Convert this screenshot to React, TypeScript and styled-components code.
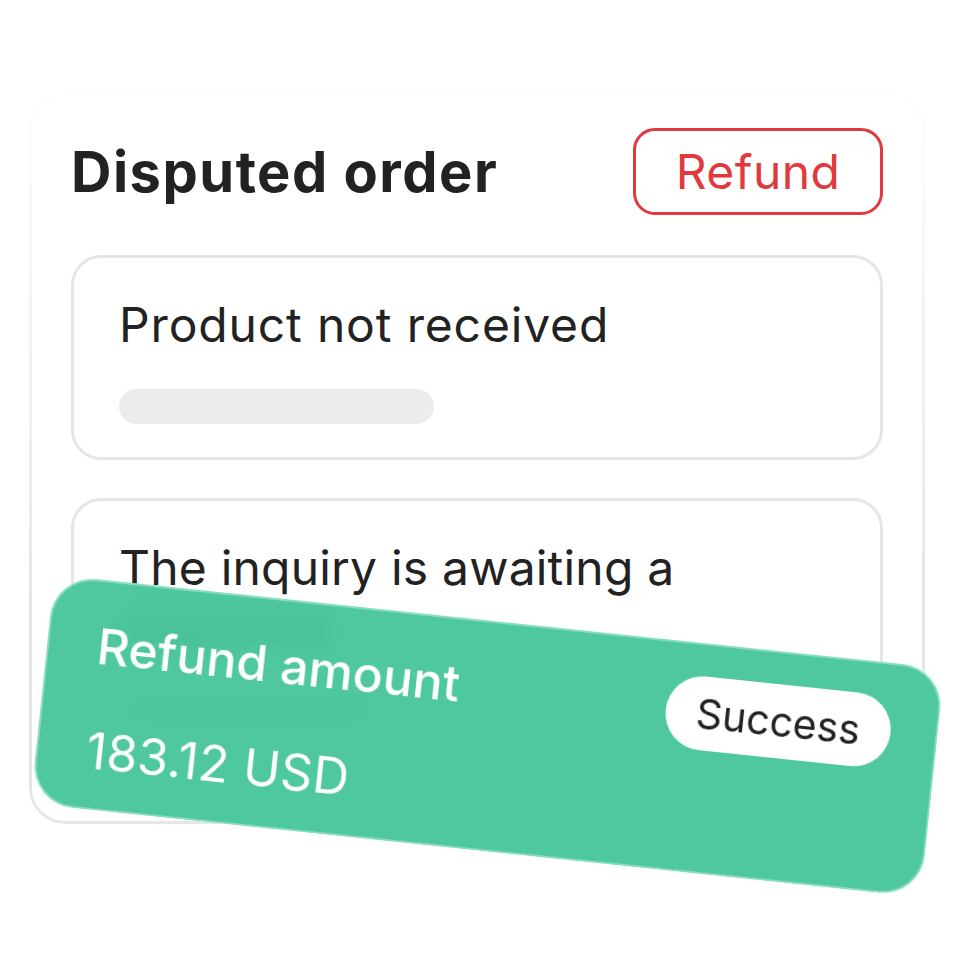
import React from 'react';
import styled, { createGlobalStyle } from 'styled-components';

const GlobalStyle = createGlobalStyle`
	html, body {
		margin: 0;
		padding: 0;
		background: #ffffff;
	}
	body {
		font-family: Inter, 'Noto Sans', sans-serif;
		color: #222222;
	}
`;

const Page = styled.div`
	position: relative;
	width: 960px;
	height: 960px;
	padding: 93px 0 0 29px;
	box-sizing: border-box;
	overflow: hidden;
`;

const OuterCard = styled.section`
	position: relative;
	width: 896px;
	box-sizing: border-box;
	padding: 35px 42px 61px 42px;
	display: flex;
	flex-direction: column;
	gap: 40px;
	border-radius: 36px;
	background: #ffffff;

	&::before {
		content: '';
		position: absolute;
		inset: 0;
		border: 3px solid #e6e6e6;
		border-radius: 36px;
		pointer-events: none;
		-webkit-mask-image: linear-gradient(to bottom, rgba(0, 0, 0, 0.05) 0%, #000 70%);
		mask-image: linear-gradient(to bottom, rgba(0, 0, 0, 0.05) 0%, #000 70%);
	}
`;

const Header = styled.header`
	display: flex;
	align-items: center;
	justify-content: space-between;
`;

const Title = styled.h1`
	margin: 0;
	font-size: 56px;
	font-weight: 700;
	letter-spacing: 1.5px;
	color: #222222;
`;

const OutlineButton = styled.button`
	width: 250px;
	height: 87px;
	box-sizing: border-box;
	border: 3px solid #e03a3e;
	border-radius: 22px;
	background: #ffffff;
	color: #e03a3e;
	font-family: Inter, sans-serif;
	font-size: 48px;
	font-weight: 400;
	letter-spacing: 0.4px;
	padding: 0;
`;

const Stack = styled.div`
	display: flex;
	flex-direction: column;
	gap: 38px;
`;

const InfoCard = styled.div`
	box-sizing: border-box;
	border: 3px solid #e6e6e6;
	border-radius: 30px;
	padding: 37px 45px 33px 45px;
	display: flex;
	flex-direction: column;
	gap: 34px;
`;

const InfoText = styled.p<{ $tracking?: number }>`
	margin: 0;
	font-size: 48px;
	line-height: 60px;
	font-weight: 400;
	letter-spacing: ${({ $tracking = 0.85 }) => $tracking}px;
	color: #222222;
	max-width: 620px;
`;

const Placeholder = styled.div<{ $width: number }>`
	width: ${({ $width }) => $width}px;
	height: 35px;
	border-radius: 18px;
	background: #ececec;
`;

const GlassCard = styled.div`
	position: absolute;
	left: 40px;
	top: 621px;
	width: 895px;
	height: 230px;
	box-sizing: border-box;
	padding: 31px 45px 0 48px;
	border-radius: 42px;
	background: rgba(60, 194, 149, 0.9);
	border: 2px solid rgba(140, 225, 196, 0.9);
	backdrop-filter: blur(14px);
	-webkit-backdrop-filter: blur(14px);
	transform: rotate(6deg);
	color: #ffffff;
	display: grid;
	grid-template-columns: 1fr auto;
	grid-template-rows: auto auto;
	row-gap: 7px;
	align-items: start;
`;

const GlassLabel = styled.div`
	margin-top: 3px;
	font-size: 50px;
	line-height: 60px;
	font-weight: 500;
`;

const GlassAmount = styled.div`
	grid-column: 1 / 2;
	font-size: 50px;
	line-height: 60px;
	font-weight: 400;
	letter-spacing: 0.3px;
`;

const StatusPill = styled.span`
	display: inline-flex;
	align-items: center;
	justify-content: center;
	width: 226px;
	height: 74px;
	border-radius: 37px;
	background: #ffffff;
	color: #222222;
	font-size: 41px;
	font-weight: 400;
`;

export default function App() {
	return (
		<Page>
			<GlobalStyle />
			<OuterCard>
				<Header>
					<Title>Disputed order</Title>
					<OutlineButton>Refund</OutlineButton>
				</Header>
				<Stack>
					<InfoCard>
						<InfoText>Product not received</InfoText>
						<Placeholder $width={315} />
					</InfoCard>
					<InfoCard>
						<InfoText $tracking={0.2}>The inquiry is awaiting a response</InfoText>
						<Placeholder $width={260} />
					</InfoCard>
				</Stack>
			</OuterCard>
			<GlassCard>
				<GlassLabel>Refund amount</GlassLabel>
				<StatusPill>Success</StatusPill>
				<GlassAmount>183.12 USD</GlassAmount>
			</GlassCard>
		</Page>
	);
}
